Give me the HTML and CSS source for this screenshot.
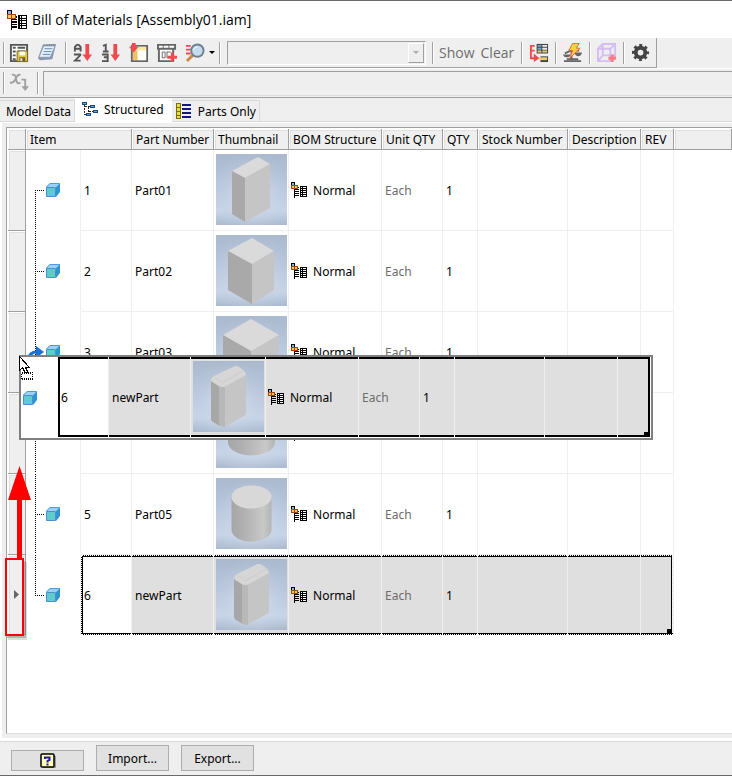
FILE: index.html
```html
<!DOCTYPE html>
<html lang="en">
<head>
    <meta charset="UTF-8">
    <meta name="viewport" content="width=device-width, initial-scale=1.0">
    <title>Bill of Materials [Assembly01.iam]</title>
    <link rel="stylesheet" href="styles.css">
</head>
<body>

    <!-- Shared icons -->
    <svg class="defs" aria-hidden="true">
        <defs>
            <linearGradient id="sky" x1="0" y1="0" x2="0" y2="1">
                <stop offset="0" stop-color="#a9b7cc"/>
                <stop offset="0.45" stop-color="#bac8de"/>
                <stop offset="0.8" stop-color="#cedaec"/>
                <stop offset="1" stop-color="#a8b7cd"/>
            </linearGradient>
            <radialGradient id="glow" cx="0.5" cy="0.6" r="0.6">
                <stop offset="0" stop-color="#dbe5f4" stop-opacity="0.9"/>
                <stop offset="1" stop-color="#b4c2d6" stop-opacity="0.2"/>
            </radialGradient>
            <linearGradient id="round" x1="0" y1="0" x2="1" y2="0">
                <stop offset="0" stop-color="#a6a6a6"/>
                <stop offset="0.3" stop-color="#b0b0b0"/>
                <stop offset="0.8" stop-color="#c8c8c8"/>
                <stop offset="1" stop-color="#b4b4b4"/>
            </linearGradient>
            <symbol id="bom" viewBox="0 0 16 16">
                <g shape-rendering="crispEdges">
                    <path fill="#000" d="M0 0h4v4H0zM3 5h1v11H3zM4 5h4v1H4zM4 7h4v1H4zM4 9h4v1H4zM4 11h4v1H4zM4 13h4v1H4zM9 4h7v11H9z"/>
                    <path fill="#7db8ee" d="M1 1h2v2H1z"/>
                    <path fill="#a0460c" d="M0 3h7v4H0z"/>
                    <path fill="#ffc65c" d="M1 4h2v2H1zM4 4h2v2H4z"/>
                    <path fill="#fff" d="M10 5h1v1h-1zM12 5h3v1h-3zM10 7h1v1h-1zM12 7h3v1h-3zM10 9h1v1h-1zM12 9h3v1h-3zM10 11h1v1h-1zM12 11h3v1h-3zM10 13h1v1h-1zM12 13h3v1h-3z"/>
                </g>
            </symbol>
            <symbol id="cube" viewBox="0 0 14 14">
                <path fill="#5fcccb" stroke="#4a8fd0" d="M.5 4.5h9v9h-9z"/>
                <path fill="#9ad0fb" d="M0 4 4 0h10l-4 4z"/>
                <path fill="#2f95d0" d="M10 4l4-4v9l-4 5z"/>
                <path fill="none" stroke="#4a9be0" d="M.5 4 4 .5h9.500"/>
            </symbol>
            <symbol id="branch-first" viewBox="0 0 20 80">
                <path fill="none" stroke="#000" stroke-dasharray="1 1" d="M9 40.500h9M9.500 40v40"/>
            </symbol>
            <symbol id="branch" viewBox="0 0 20 80">
                <path fill="none" stroke="#000" stroke-dasharray="1 1" d="M9.500 0v80M9 40.500h9"/>
            </symbol>
            <symbol id="branch-last" viewBox="0 0 20 80">
                <path fill="none" stroke="#000" stroke-dasharray="1 1" d="M9.500 0v41M9 40.500h9"/>
            </symbol>
            <symbol id="block-tall" viewBox="0 0 71 71">
                <path fill="url(#sky)" d="M0 0h71v71H0z"/><path fill="url(#glow)" d="M0 0h71v71H0z"/>
                <path fill="#dadada" d="M42 3 54 10 29 24 16 17z"/>
                <path fill="#a9a9a9" d="M16 17 29 24v44l-13-8z"/>
                <path fill="#c5c5c5" d="M29 24 54 10v44L29 68z"/>
            </symbol>
            <symbol id="block-square" viewBox="0 0 71 71">
                <path fill="url(#sky)" d="M0 0h71v71H0z"/><path fill="url(#glow)" d="M0 0h71v71H0z"/>
                <path fill="#dadada" d="M36 3 58 16 36 29 12 16z"/>
                <path fill="#a9a9a9" d="M12 16 36 29v40L12 55z"/>
                <path fill="#c5c5c5" d="M36 29 58 16v39L36 69z"/>
            </symbol>
            <symbol id="block-wide" viewBox="0 0 71 71">
                <path fill="url(#sky)" d="M0 0h71v71H0z"/><path fill="url(#glow)" d="M0 0h71v71H0z"/>
                <path fill="#dadada" d="M35 3 63 19 35 35 7 19z"/>
                <path fill="#a9a9a9" d="M7 19 35 35v33L7 52z"/>
                <path fill="#c5c5c5" d="M35 35 63 19v33L35 68z"/>
            </symbol>
            <symbol id="disc" viewBox="0 0 71 71">
                <path fill="url(#sky)" d="M0 0h71v71H0z"/><path fill="url(#glow)" d="M0 0h71v71H0z"/>
                <path fill="url(#round)" d="M12 26v19a23.500 13.500 0 0 0 47 0V26z"/>
                <ellipse fill="#d6d6d6" cx="35.500" cy="26" rx="23.500" ry="13.500"/>
            </symbol>
            <symbol id="cylinder" viewBox="0 0 71 71">
                <path fill="url(#sky)" d="M0 0h71v71H0z"/><path fill="url(#glow)" d="M0 0h71v71H0z"/>
                <path fill="url(#round)" d="M15.500 19v33a20 11.500 0 0 0 40 0V19z"/>
                <ellipse fill="#d8d8d8" cx="35.500" cy="19" rx="20" ry="11.500"/>
            </symbol>
            <symbol id="block-round" viewBox="0 0 71 71">
                <path fill="url(#sky)" d="M0 0h71v71H0z"/><path fill="url(#glow)" d="M0 0h71v71H0z"/>
                <path fill="#c5c5c5" d="M18 20q0-3 3-5L40 6q3-2 6 0l4 3q3 2 3 5v38q0 2-2 3L33 65q-3 2-5 0l-8-4q-2-1-2-3z"/>
                <path fill="#a7a7a7" d="M18 20l9 6v39l-7-4q-2-1-2-3z"/>
                <path fill="#b8b8b8" d="M26 26h6v40q-3 0-6-2z"/>
                <path fill="#d6d6d6" d="M18 20q0-3 3-5L40 6q3-2 6 0l4 3q3 2 3 5L33 25q-4 2-7 0z"/>
                <path fill="none" stroke="#cbcbcb" d="M22 17q4 1 7 5L50 10"/>
            </symbol>
        </defs>
    </svg>

    <div class="window">
        <header class="title-bar">
            <svg class="title-icon"><use href="#bom"/></svg>
            <h1>Bill of Materials [Assembly01.iam]</h1>
        </header>

        <!-- Main toolbar -->
        <div class="toolbar-row">
            <div class="toolbar">
                <span class="grip"></span>
                <button class="tool" aria-label="Save view">
                    <svg viewBox="0 0 21 21">
                        <path fill="#fff" stroke="#555" stroke-width="2" d="M2 2h17v17H2z"/>
                        <path stroke="#555" stroke-width="2" d="M4 5h3M9 5h8M4 9h3M9 9h8M4 13h3M4 17h3"/>
                        <path fill="#e3c341" stroke="#7a6a2a" d="M8.500 8.500h11v11h-11z"/>
                        <path fill="#fff" d="M11 9h6v4h-6z"/><path fill="#6d6030" d="M11 15h6v4h-6z"/><path fill="#eee" d="M12 16h2v3h-2z"/>
                    </svg>
                </button>
                <button class="tool" aria-label="Notes">
                    <svg viewBox="0 0 21 21">
                        <path fill="#8797aa" d="M1 16 6 2l14-1-4 16-13 1z"/>
                        <path fill="#e2f0fc" stroke="#8e9db2" d="M2 15 7 3h12l-5 12z"/>
                        <path stroke="#5f86b4" d="M8 6h8M7 9h8M6 12h8"/>
                        <path stroke="#6d7784" stroke-width="2" stroke-dasharray="1 1" d="M7 2h12"/>
                    </svg>
                </button>
                <span class="sep"></span>
                <button class="tool" aria-label="Sort">
                    <svg viewBox="0 0 21 21">
                        <path fill="none" stroke="#555" stroke-width="2" d="M2 9V4l2-2h2l2 2v5M2 6h6M1 12h6.500v1L2 18.500h6"/>
                        <path fill="#f04a4f" d="M13 1h4v11h3l-5 7-5-7h3z"/>
                    </svg>
                </button>
                <button class="tool" aria-label="Renumber items">
                    <svg viewBox="0 0 21 21">
                        <path fill="none" stroke="#555" stroke-width="2" d="M2 3l3-1v7M2 9h6M1 12h6v7H1M3 15h4"/>
                        <path fill="#f04a4f" d="M13 1h4v11h3l-5 7-5-7h3z"/>
                    </svg>
                </button>
                <button class="tool" aria-label="Choose columns">
                    <svg viewBox="0 0 21 21">
                        <path fill="#fff" stroke="#666" stroke-width="2" d="M3 3h16v16H3z"/>
                        <path fill="#ffe6a1" d="M4 4h14v4H4z"/><path fill="#efc264" d="M4 8h5v10H4z"/><path fill="#fff" d="M10 8h8v10h-8z"/>
                        <path fill="#f04a4f" d="M3 0h4v4h3l-5 6-5-6h3z"/>
                    </svg>
                </button>
                <button class="tool" aria-label="Add custom columns">
                    <svg viewBox="0 0 21 21">
                        <path fill="#fff" stroke="#666" stroke-width="2" d="M1 2h18v4H1zM2 6h15v13H2z"/>
                        <path stroke="#666" d="M6.500 2v4M12.500 2v4"/>
                        <path fill="none" stroke="#666" d="M5.500 9.500h3v6h-3zM10.500 9.500h4M10.500 9v7"/>
                        <path stroke="#f04a4f" stroke-width="3" d="M16 10v10M11 15h10"/>
                    </svg>
                </button>
                <button class="tool" aria-label="View options">
                    <svg viewBox="0 0 21 21">
                        <path stroke="#f04a4f" stroke-width="2" d="M1 3h5M1 7h5M1 11h5"/>
                        <path stroke="#c98a45" stroke-width="3" d="M8 13l-6 6"/>
                        <circle cx="13" cy="8" r="6.500" fill="#c5dcef" stroke="#6f7f90" stroke-width="2"/>
                        <path fill="none" stroke="#fff" d="M9 7q1-3 4-3"/>
                    </svg>
                </button>
                <svg class="drop" viewBox="0 0 6 4"><path d="M0 0h6L3 3z"/></svg>
                <span class="sep"></span>
                <span class="combo">
                    <select aria-label="Filter" disabled><option></option></select>
                    <span class="combo-arrow"><svg viewBox="0 0 6 4"><path fill="#aaa" d="M0 0h6L3 3z"/></svg></span>
                </span>
                <span class="sep"></span>
                <button class="text-tool">Show</button>
                <button class="text-tool">Clear</button>
                <span class="sep"></span>
                <button class="tool slim" aria-label="Part number merge">
                    <svg viewBox="0 0 21 21">
                        <path fill="none" stroke="#f04a4f" stroke-width="2" d="M6 3H2v13h4M2 8h4"/>
                        <path fill="#f04a4f" d="M5 11l6 5-6 4z"/>
                        <path fill="#444" d="M8 1h12v10H8z"/><path fill="#6fa6cc" d="M9 2h4v2H9zM9 5h4v2H9z"/><path fill="#eee" d="M14 2h5v2h-5zM14 5h5v2h-5z"/><path fill="#e8cd6a" d="M9 8h4v2H9zM14 8h5v2h-5z"/>
                        <path fill="#444" d="M12 14h8v6h-8z"/><path fill="#e8cd6a" d="M11 15h8v3h-8z"/>
                    </svg>
                </button>
                <span class="sep"></span>
                <button class="tool slim" aria-label="Update mass properties">
                    <svg viewBox="0 0 21 21">
                        <path fill="none" stroke="#666" stroke-width="2" d="M2 11l6-3h9M9 8v8M4 17h12"/>
                        <path fill="#666" d="M0 12h8q-1 3-4 3t-4-3zM12 10h8q-1 4-4 4t-4-4zM1 18h18v2H1z"/>
                        <path fill="#ffcf3d" stroke="#ed6049" d="M10 .5h7l-3 5h4L7 16l3-8H6z"/>
                    </svg>
                </button>
                <span class="sep"></span>
                <button class="tool slim" aria-label="Add virtual component">
                    <svg viewBox="0 0 21 21">
                        <path fill="none" stroke="#d5bdf5" stroke-width="2" d="M1 6h13v13H1zM1 6l5-5h13v13l-5 5M14 6l5-5M6 1v12h12M6 13l-5 6"/>
                        <path stroke="#fb7b86" stroke-width="3" d="M16 12v8M12 16h8"/>
                    </svg>
                </button>
                <span class="sep"></span>
                <button class="tool slim" aria-label="Settings">
                    <svg viewBox="0 0 21 21">
                        <circle cx="10" cy="10" r="5" fill="none" stroke="#444" stroke-width="4"/>
                        <circle cx="10" cy="10" r="7.500" fill="none" stroke="#444" stroke-width="3" stroke-dasharray="3 2.890" stroke-dashoffset="1.500"/>
                    </svg>
                </button>
            </div>
        </div>

        <!-- Formula bar -->
        <div class="formula-bar">
            <span class="grip"></span>
            <button class="tool" aria-label="Property expression" disabled>
                <svg viewBox="0 0 21 21">
                    <path fill="none" stroke="#a0a0a0" stroke-width="2" d="M3 2q3-1 4 2l1 5q1 3 4 1M12 2q-3-1-5 4t-6 4"/>
                    <path fill="none" stroke="#a0a0a0" stroke-width="2" d="M13 7h4v8"/>
                    <path fill="#a0a0a0" d="M13 14h8l-4 5z"/>
                </svg>
            </button>
            <span class="sep"></span>
            <input type="text" class="formula" aria-label="Expression" disabled>
        </div>

        <!-- Tabs -->
        <nav class="tabs">
            <button class="tab">Model Data</button>
            <button class="tab active">
                <svg viewBox="0 0 16 16" shape-rendering="crispEdges">
                    <path fill="#1b4a7a" d="M0 0h5v3H0zM8 3h5v3H8zM4 11h5v3H4zM11 8h5v3h-5z"/>
                    <path fill="#5fa8e0" d="M1 1h3v1H1zM9 4h3v1H9zM5 12h3v1H5zM12 9h3v1h-3z"/>
                    <path stroke="#222" stroke-dasharray="2 1" d="M2.500 3v10M3 4.500h5M2 12.500h2M6.500 5v6M7 9.500h4"/>
                </svg>
                Structured
            </button>
            <button class="tab">
                <svg viewBox="0 0 16 16" shape-rendering="crispEdges">
                    <path fill="#77700a" d="M0 0h5v16H0z"/>
                    <path fill="#e6df3c" d="M1 1h3v3H1zM1 5h3v3H1zM1 9h3v3H1zM1 13h3v2H1z"/>
                    <path fill="#16167c" d="M6 1h9v2H6zM6 5h9v2H6zM6 9h9v2H6zM6 13h9v2H6z"/>
                </svg>
                Parts Only
            </button>
        </nav>

        <!-- BOM grid -->
        <main class="panel">
            <div class="grid">
                <table class="bom-table">
                    <colgroup>
                        <col class="c-handle"><col class="c-tree"><col class="c-item"><col class="c-part"><col class="c-thumb"><col class="c-bom"><col class="c-unit"><col class="c-qty"><col class="c-stock"><col class="c-desc"><col class="c-rev"><col>
                    </colgroup>
                    <thead>
                        <tr>
                            <th></th>
                            <th colspan="2">Item</th>
                            <th>Part Number</th>
                            <th>Thumbnail</th>
                            <th>BOM Structure</th>
                            <th>Unit QTY</th>
                            <th>QTY</th>
                            <th>Stock Number</th>
                            <th>Description</th>
                            <th>REV</th>
                            <th class="filler"></th>
                        </tr>
                    </thead>
                    <tbody>
                        <tr>
                            <td class="handle"></td>
                            <td class="tree"><div><svg class="branch"><use href="#branch-first"/></svg><svg class="cube"><use href="#cube"/></svg></div></td>
                            <td>1</td>
                            <td>Part01</td>
                            <td class="thumb"><svg><use href="#block-tall"/></svg></td>
                            <td class="structure"><div><svg><use href="#bom"/></svg>Normal</div></td>
                            <td class="unit">Each</td>
                            <td>1</td>
                            <td></td><td></td><td></td><td class="filler"></td>
                        </tr>
                        <tr>
                            <td class="handle"></td>
                            <td class="tree"><div><svg class="branch"><use href="#branch"/></svg><svg class="cube"><use href="#cube"/></svg></div></td>
                            <td>2</td>
                            <td>Part02</td>
                            <td class="thumb"><svg><use href="#block-square"/></svg></td>
                            <td class="structure"><div><svg><use href="#bom"/></svg>Normal</div></td>
                            <td class="unit">Each</td>
                            <td>1</td>
                            <td></td><td></td><td></td><td class="filler"></td>
                        </tr>
                        <tr>
                            <td class="handle"></td>
                            <td class="tree">
                                <div>
                                    <svg class="branch" viewBox="0 0 20 80">
                                        <path fill="none" stroke="#000" stroke-dasharray="1 1" d="M9.500 0v80"/>
                                        <path fill="none" stroke="#1672d8" stroke-width="3" d="M3 47q0-7 8-7"/>
                                        <path fill="#1672d8" d="M10 34l8 6-8 6z"/>
                                    </svg>
                                    <svg class="cube"><use href="#cube"/></svg>
                                </div>
                            </td>
                            <td>3</td>
                            <td>Part03</td>
                            <td class="thumb"><svg><use href="#block-wide"/></svg></td>
                            <td class="structure"><div><svg><use href="#bom"/></svg>Normal</div></td>
                            <td class="unit">Each</td>
                            <td>1</td>
                            <td></td><td></td><td></td><td class="filler"></td>
                        </tr>
                        <tr>
                            <td class="handle"></td>
                            <td class="tree"><div><svg class="branch"><use href="#branch"/></svg><svg class="cube"><use href="#cube"/></svg></div></td>
                            <td></td>
                            <td></td>
                            <td class="thumb"><svg><use href="#disc"/></svg></td>
                            <td class="structure"><div><svg><use href="#bom"/></svg></div></td>
                            <td class="unit"></td>
                            <td></td>
                            <td></td><td></td><td></td><td class="filler"></td>
                        </tr>
                        <tr>
                            <td class="handle"></td>
                            <td class="tree"><div><svg class="branch"><use href="#branch"/></svg><svg class="cube"><use href="#cube"/></svg></div></td>
                            <td>5</td>
                            <td>Part05</td>
                            <td class="thumb"><svg><use href="#cylinder"/></svg></td>
                            <td class="structure"><div><svg><use href="#bom"/></svg>Normal</div></td>
                            <td class="unit">Each</td>
                            <td>1</td>
                            <td></td><td></td><td></td><td class="filler"></td>
                        </tr>
                        <tr class="selected">
                            <td class="handle"><svg viewBox="0 0 5 9"><path fill="#666" d="M0 0l5 4.500L0 9z"/></svg></td>
                            <td class="tree"><div><svg class="branch"><use href="#branch-last"/></svg><svg class="cube"><use href="#cube"/></svg></div></td>
                            <td class="current">6<span class="focus"></span></td>
                            <td>newPart</td>
                            <td class="thumb"><svg><use href="#block-round"/></svg></td>
                            <td class="structure"><div><svg><use href="#bom"/></svg>Normal</div></td>
                            <td class="unit">Each</td>
                            <td>1</td>
                            <td></td><td></td><td></td><td class="filler"></td>
                        </tr>
                    </tbody>
                </table>

                <!-- Row being dragged -->
                <div class="drag-row">
                    <div class="drag-tree"><svg class="cube"><use href="#cube"/></svg></div>
                    <div class="drag-cells">
                        <span class="current">6</span>
                        <span>newPart</span>
                        <span class="thumb"><svg><use href="#block-round"/></svg></span>
                        <span class="structure"><svg><use href="#bom"/></svg>Normal</span>
                        <span class="unit">Each</span>
                        <span>1</span>
                        <span></span>
                        <span></span>
                        <span></span>
                    </div>
                </div>

                <svg class="cursor" viewBox="0 0 16 26" shape-rendering="crispEdges">
                    <path fill="#fff" stroke="#000" d="M.5.5v14l3-3 3 6h3l-3-6h4z"/>
                    <path fill="#fff" stroke="#000" stroke-dasharray="1 1" d="M2.500 16.500h11v7h-11z"/>
                    <path fill="none" stroke="#000" stroke-dasharray="1 1" d="M3 17.500h10M3 22.500h10"/>
                </svg>

                <!-- Callout: drag the row up -->
                <svg class="callout" viewBox="0 0 28 176">
                    <path fill="none" stroke="#777" stroke-opacity="0.25" stroke-width="4" d="M20 98v76H3"/>
                    <path fill="none" stroke="#777" stroke-opacity="0.4" stroke-width="2" d="M20 97v76H2"/>
                    <path fill="#f00" d="M14.500 2 26 36h-9v58h-5V36H3z"/>
                    <path fill="none" stroke="#f00" stroke-width="2" d="M1 95h17v76H1z"/>
                </svg>
            </div>
        </main>

        <footer class="footer">
            <button class="btn help" aria-label="Help">
                <svg viewBox="0 0 16 16">
                    <path fill="#999" d="M3 3h13v12H3z"/>
                    <rect x="1" y="1" width="13" height="13" rx="1" fill="#ffffb8" stroke="#000" stroke-width="1.500"/>
                    <path fill="none" stroke="#1c1ca0" stroke-width="2" d="M5 6V4.500h4.500V7L7.500 8v1.500M7.500 10.500v2"/>
                </svg>
            </button>
            <button class="btn">Import...</button>
            <button class="btn">Export...</button>
        </footer>
    </div>

</body>
</html>
```
FILE: styles.css
```css
* {
    box-sizing: border-box;
}

body {
    margin: 0;
    background-color: #fff;
    color: #000;
    font-family: "Noto Sans", sans-serif;
    font-size: 12px;
}

button, input, select {
    font: inherit;
    color: inherit;
}

svg {
    display: block;
}

.defs {
    position: absolute;
    width: 0;
    height: 0;
}

.window {
    display: flex;
    flex-direction: column;
    min-height: 100vh;
    overflow: hidden;
    border-top: 1px solid #6b6b66;
    border-bottom: 1px solid #6b6b66;
}

/* Title bar */
.title-bar {
    display: flex;
    align-items: center;
    gap: 5px;
    height: 37px;
    padding-left: 7px;
}

.title-icon {
    width: 20px;
    height: 20px;
}

h1 {
    margin: 0;
    font-family: "Open Sans", "Noto Sans", sans-serif;
    font-size: 14px;
    font-weight: normal;
}

/* Toolbars */
.toolbar-row {
    display: flex;
    background-color: #efefef;
    border-bottom: 1px solid #fff;
}

.toolbar {
    display: flex;
    align-items: center;
    height: 30px;
    padding: 0 3px;
    border-right: 1px solid #a0a0a0;
    border-bottom: 1px solid #a0a0a0;
}

.grip, .sep {
    flex: none;
    width: 2px;
    height: 22px;
    background-color: #a0a0a0;
    border-right: 1px solid #fff;
}

.sep {
    margin: 0 2px 0 4px;
}

.tool {
    flex: none;
    width: 28px;
    height: 24px;
    padding: 0 4px;
    border: none;
    background: none;
}

.tool svg {
    width: 20px;
    height: 20px;
}

.slim {
    width: 26px;
    padding-right: 2px;
}

.drop {
    width: 6px;
    height: 4px;
}

.combo {
    display: flex;
    width: 199px;
    height: 24px;
    margin: 0 2px 0 4px;
    padding: 1px;
    border: 1px solid #a0a0a0;
    border-right-color: #fff;
    border-bottom-color: #fff;
}

.combo select {
    flex: 1;
    min-width: 0;
    border: none;
    background: none;
    appearance: none;
}

.combo-arrow {
    display: flex;
    align-items: center;
    justify-content: center;
    width: 16px;
    border: 1px solid #fff;
    border-right-color: #a0a0a0;
    border-bottom-color: #a0a0a0;
}

.combo-arrow svg {
    width: 6px;
    height: 4px;
}

.text-tool {
    padding: 0 3px;
    border: none;
    background: none;
    color: #6d6d6d;
    font-family: "Open Sans", "Noto Sans", sans-serif;
    font-size: 14px;
}

.formula-bar {
    display: flex;
    align-items: center;
    height: 29px;
    padding-left: 3px;
    background-color: #efefef;
    border-bottom: 1px solid #a0a0a0;
}

.formula {
    flex: 1;
    min-width: 0;
    height: 25px;
    margin-left: 2px;
    border: 1px solid #dcdcdc;
    border-top-color: #a0a0a0;
    border-left-color: #a0a0a0;
    border-right: none;
    background: none;
}

/* Tabs */
.tabs {
    display: flex;
    align-items: flex-end;
    height: 24px;
    background-color: #efefef;
    border-bottom: 1px solid #d9d9d9;
}

.tab {
    display: flex;
    align-items: center;
    gap: 6px;
    height: 21px;
    padding: 0 3px 0 4px;
    border: 1px solid #d9d9d9;
    border-left: none;
    border-bottom: none;
    background-color: #efefef;
}

.tab svg {
    width: 16px;
    height: 16px;
}

.tab:first-child {
    padding-left: 6px;
}

.tab.active {
    height: 24px;
    margin-bottom: -1px;
    padding: 0 7px 2px;
    background-color: #fff;
    border-color: #fff;
}

/* Grid */
.panel {
    display: flex;
    flex: 1;
    padding: 1px 0 2px 2px;
}

.grid {
    position: relative;
    flex: 1;
    min-width: 0;
    padding: 1px 0 0 1px;
    border-top: 1px solid #a0a0a0;
    border-left: 1px solid #a0a0a0;
    border-bottom: 1px solid #dcdcdc;
    box-shadow: 0 0 0 4px #efefef;
    margin: 4px 0 5px 4px;
}

.bom-table {
    width: 100%;
    table-layout: fixed;
    border-spacing: 0;
}

.c-handle { width: 18px; }
.c-tree { width: 55px; }
.c-item { width: 51px; }
.c-part { width: 82px; }
.c-thumb { width: 75px; }
.c-bom { width: 93px; }
.c-unit { width: 61px; }
.c-qty { width: 35px; }
.c-stock { width: 90px; }
.c-desc { width: 73px; }
.c-rev { width: 33px; }

th {
    height: 21px;
    padding: 0 0 0 4px;
    background-color: #efefef;
    border-right: 1px solid #a0a0a0;
    border-bottom: 1px solid #a0a0a0;
    box-shadow: inset 1px 1px #fff, inset 2px 2px #e0e0e0;
    font-weight: normal;
    text-align: left;
    white-space: nowrap;
}

td {
    height: 81px;
    padding: 0 0 0 3px;
    border-right: 1px solid #efefef;
    border-bottom: 1px solid #efefef;
}

.handle {
    padding-left: 6px;
    background-color: #efefef;
    border-color: #a0a0a0;
    box-shadow: inset 1px 1px #fff, inset 2px 2px #e0e0e0;
}

.handle svg {
    width: 5px;
    height: 9px;
}

.tree {
    padding: 0;
    border-bottom-color: #fff;
}

.tree div {
    display: flex;
    align-items: center;
    height: 80px;
}

.branch {
    width: 20px;
    height: 80px;
}

.cube {
    width: 14px;
    height: 14px;
}

.thumb {
    padding: 4px 0 0 2px;
    vertical-align: top;
}

.thumb svg {
    width: 71px;
    height: 71px;
}

.structure {
    padding-left: 2px;
}

.structure div, .drag-cells .structure {
    display: flex;
    align-items: center;
    gap: 6px;
}

.structure svg {
    width: 16px;
    height: 16px;
}

.unit {
    color: #6d6d6d;
}

td.filler {
    border: none;
}

/* Selected row */
.selected td {
    height: 80px;
    border-bottom: none;
    background-color: #dfdfdf;
    box-shadow: inset 0 2px #000, inset 0 -2px #000;
}

.selected .tree, .selected .filler {
    background-color: #fff;
    box-shadow: none;
}

.selected .handle {
    background-color: #efefef;
    border-bottom: 1px solid #a0a0a0;
    box-shadow: inset 1px 1px #fff, inset 2px 2px #e0e0e0;
}

.selected .current {
    position: relative;
    background-color: #fff;
    box-shadow: inset 2px 2px #000, inset 0 -2px #000;
}

.focus {
    position: absolute;
    top: 0;
    left: 0;
    width: 592px;
    height: 80px;
    border: 1px dotted #fff;
    box-shadow: inset -1px 0 #000;
}

.focus::after {
    content: "";
    position: absolute;
    right: 0;
    bottom: 0;
    width: 5px;
    height: 5px;
    background-color: #000;
}

/* Dragged row, floats over the grid */
.drag-row {
    position: absolute;
    top: 227px;
    left: 12px;
    display: flex;
    width: 634px;
    height: 85px;
    border: 2px solid #808080;
    background-color: #fff;
}

.drag-tree {
    display: flex;
    flex: none;
    align-items: center;
    width: 37px;
    padding-left: 2px;
}

.drag-cells {
    position: relative;
    display: grid;
    flex: none;
    grid-template-columns: 51px 82px 75px 93px 61px 35px 90px 73px 30px;
    height: 80px;
    border-right: 2px solid #000;
}

.drag-cells span {
    display: flex;
    align-items: center;
    padding: 0 0 0 3px;
    border-right: 1px solid #efefef;
    background-color: #dfdfdf;
    box-shadow: inset 0 2px #000, inset 0 -2px #000;
}

.drag-cells .current {
    background-color: #fff;
    box-shadow: inset 2px 2px #000, inset 0 -2px #000;
}

.drag-cells .structure {
    padding-left: 2px;
}

.drag-cells .thumb {
    align-items: flex-start;
    padding: 4px 0 0 2px;
}

.drag-cells span:last-child {
    border-right: none;
}

.drag-cells::after {
    content: "";
    position: absolute;
    right: -1px;
    bottom: 0;
    width: 5px;
    height: 5px;
    background-color: #000;
}

.cursor {
    position: absolute;
    top: 228px;
    left: 12px;
    width: 16px;
    height: 26px;
}

.callout {
    position: absolute;
    top: 336px;
    left: -2px;
    width: 28px;
    height: 176px;
}

/* Footer */
.footer {
    display: flex;
    align-items: flex-end;
    gap: 12px;
    height: 34px;
    padding: 0 11px 4px;
    background-color: #efefef;
    border-top: 1px solid #d9d9d9;
}

.btn {
    width: 73px;
    height: 26px;
    padding: 0;
    border: 1px solid #adadad;
    background-color: #e1e1e1;
}

.help {
    display: flex;
    align-items: center;
    justify-content: center;
    height: 21px;
}

.help svg {
    width: 16px;
    height: 16px;
}
```
